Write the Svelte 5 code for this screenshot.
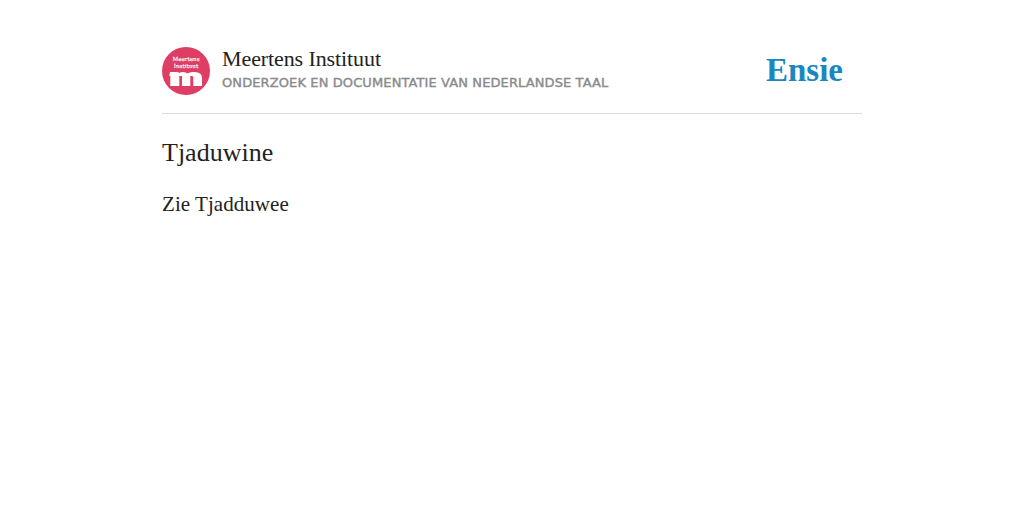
<script>
  const title = 'Tjaduwine';
  const body = 'Zie Tjadduwee';
</script>

<div class="page">
  <header class="header">
    <div class="brand">
      <div class="logo">
        <svg width="48" height="48" viewBox="0 0 48 48">
          <circle cx="24" cy="24" r="24" fill="#de3e63" />
          <text x="24" y="13.500" class="logo-text">Meertens</text>
          <text x="24" y="20.500" class="logo-text">Instituut</text>
          <path fill="#fff" d="M8 25h8l1 1q2-1 4-1 3 0 4.500 1.500 2-1.500 5-1.500h2q7.500 0 7.500 6v8h-8.700v-8.500q0-1.500-1.500-1.500h-1.500v10h-8.300v-10h-2.700v10h-9v-10h-1z" />
        </svg>
      </div>
      <div class="brand-text">
        <div class="name">Meertens Instituut</div>
        <div class="tagline">Onderzoek en documentatie van Nederlandse taal</div>
      </div>
    </div>
    <div class="ensie">Ensie</div>
  </header>

  <main class="content">
    <h1>{title}</h1>
    <p>{body}</p>
  </main>
</div>

<style>
  :global(body) {
    margin: 0;
    background: #fff;
  }
  .page {
    width: 700px;
    margin: 0 auto;
    padding-top: 47px;
    color: #222;
    font-family: "Liberation Serif", serif;
  }
  .header {
    display: flex;
    justify-content: space-between;
    align-items: flex-start;
    height: 66px;
    border-bottom: 1px solid #ddd;
  }
  .brand {
    display: flex;
    gap: 12px;
  }
  .logo {
    width: 48px;
    height: 48px;
  }
  .logo svg {
    display: block;
  }
  .logo-text {
    font-family: "DejaVu Serif", serif;
    font-size: 5.600px;
    fill: #fff;
    stroke: #fff;
    stroke-width: 0.15;
    text-anchor: middle;
  }
  .brand-text {
    display: flex;
    flex-direction: column;
  }
  .name {
    font-size: 22px;
    line-height: 24px;
    letter-spacing: -0.1px;
  }
  .tagline {
    margin-top: 4px;
    font-family: "DejaVu Sans", sans-serif;
    font-size: 13px;
    line-height: 16px;
    letter-spacing: 0.11px;
    -webkit-text-stroke: 0.4px #8a8a8a;
    text-transform: uppercase;
    color: #8a8a8a;
  }
  .ensie {
    margin-right: 19px;
    font-size: 33px;
    line-height: 46px;
    font-weight: bold;
    color: #1c87bf;
  }
  .content h1 {
    margin: 23px 0 0;
    font-size: 26px;
    line-height: 32px;
    font-weight: normal;
  }
  .content p {
    margin: 21px 0 0;
    font-size: 21px;
    line-height: 28px;
    letter-spacing: 0.05px;
  }
</style>
